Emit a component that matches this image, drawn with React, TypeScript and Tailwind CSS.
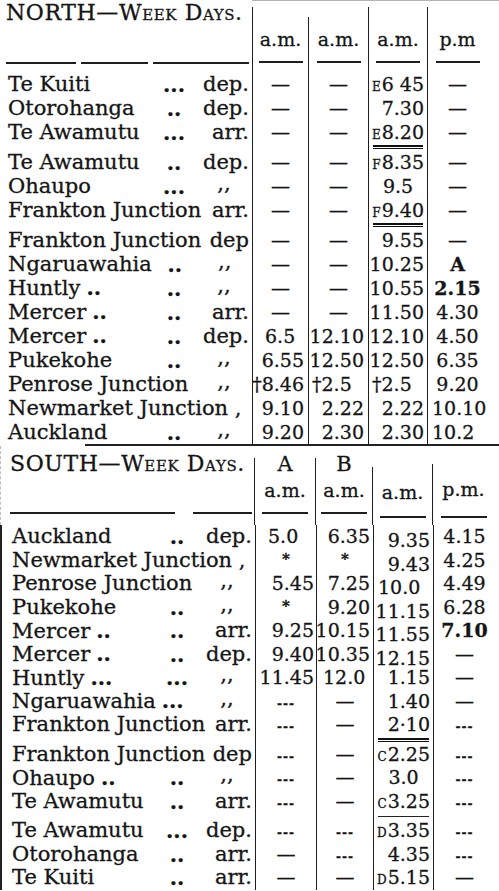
import React from 'react';

type Cell = string | { t: string; a?: 'l' | 'c' | 'r'; b?: boolean; low?: boolean };
type Row = { name: string; nd?: string; dots?: string; suf?: string; cells: Cell[]; rule?: 'thick' | 'thin' };
type Pad = { r: string; l: string; c: string };

const LINE = 'border-l-[1.5px] border-[#1e1e1e]';
const NORTH_GRID = 'grid grid-cols-[252px_56px_60px_59px_72px]';
const SOUTH_GRID = 'grid grid-cols-[253px_61px_57px_60px_68px]';

const north: Row[] = [
  { name: 'Te Kuiti', dots: '...', suf: 'dep.', cells: ['—', '—', 'E6 45', '—'] },
  { name: 'Otorohanga', dots: '..', suf: 'dep.', cells: ['—', '—', '7.30', '—'] },
  { name: 'Te Awamutu', dots: '...', suf: 'arr.', cells: ['—', '—', 'E8.20', '—'], rule: 'thick' },
  { name: 'Te Awamutu', dots: '..', suf: 'dep.', cells: ['—', '—', 'F8.35', '—'] },
  { name: 'Ohaupo', dots: '...', suf: ',,', cells: ['—', '—', { t: '9.5', a: 'c' }, '—'] },
  { name: 'Frankton Junction', suf: 'arr.', cells: ['—', '—', 'F9.40', '—'], rule: 'thick' },
  { name: 'Frankton Junction', suf: 'dep', cells: ['—', '—', '9.55', '—'] },
  { name: 'Ngaruawahia', dots: '..', suf: ',,', cells: ['—', '—', '10.25', { t: 'A', b: true }] },
  { name: 'Huntly', nd: '..', dots: '..', suf: ',,', cells: ['—', '—', '10.55', { t: '2.15', b: true }] },
  { name: 'Mercer', nd: '..', dots: '..', suf: 'arr.', cells: ['—', '—', '11.50', '4.30'] },
  { name: 'Mercer', nd: '..', dots: '..', suf: 'dep.', cells: [{ t: '6.5', a: 'l' }, '12.10', '12.10', '4.50'] },
  { name: 'Pukekohe', dots: '..', suf: ',,', cells: ['6.55', '12.50', '12.50', '6.35'] },
  { name: 'Penrose Junction', suf: ',,', cells: ['†8.46', { t: '†2.5', a: 'l' }, { t: '†2.5', a: 'l' }, '9.20'] },
  { name: 'Newmarket Junction ,', cells: ['9.10', '2.22', '2.22', { t: '10.10', a: 'l' }] },
  { name: 'Auckland', dots: '..', suf: ',,', cells: ['9.20', '2.30', '2.30', { t: '10.2', a: 'l' }] },
];

const south: Row[] = [
  { name: 'Auckland', dots: '..', suf: 'dep.', cells: [{ t: '5.0', a: 'l' }, '6.35', { t: '9.35', low: true }, '4.15'] },
  { name: 'Newmarket Junction ,', cells: ['*', '*', { t: '9.43', low: true }, '4.25'] },
  { name: 'Penrose Junction', suf: ',,', cells: ['5.45', '7.25', { t: '10.0', a: 'l', low: true }, '4.49'] },
  { name: 'Pukekohe', dots: '..', suf: ',,', cells: ['*', '9.20', { t: '11.15', low: true }, '6.28'] },
  { name: 'Mercer', nd: '..', dots: '..', suf: 'arr.', cells: ['9.25', '10.15', { t: '11.55', low: true }, { t: '7.10', b: true }] },
  { name: 'Mercer', nd: '..', dots: '..', suf: 'dep.', cells: ['9.40', '10.35', { t: '12.15', low: true }, '—'] },
  { name: 'Huntly', nd: '...', dots: '...', suf: ',,', cells: ['11.45', { t: '12.0', a: 'l' }, '1.15', '—'] },
  { name: 'Ngaruawahia', nd: '...', suf: ',,', cells: ['---', '—', '1.40', '—'] },
  { name: 'Frankton Junction', suf: 'arr.', cells: ['---', '—', '2·10', '---'], rule: 'thick' },
  { name: 'Frankton Junction', suf: 'dep', cells: ['---', '—', 'C2.25', '---'] },
  { name: 'Ohaupo', nd: '..', dots: '..', suf: ',,', cells: ['---', '—', { t: '3.0', a: 'c' }, '---'] },
  { name: 'Te Awamutu', dots: '..', suf: 'arr.', cells: ['---', '—', 'C3.25', '---'], rule: 'thin' },
  { name: 'Te Awamutu', dots: '...', suf: 'dep.', cells: ['---', '---', 'D3.35', '---'] },
  { name: 'Otorohanga', dots: '..', suf: 'arr.', cells: ['—', '---', '4.35', '---'] },
  { name: 'Te Kuiti', dots: '..', suf: 'arr.', cells: ['—', '—', 'D5.15', '—'] },
];

const northPads: Pad[] = [
  { r: 'pr-[4px]', l: 'pl-[12px]', c: '' },
  { r: 'pr-[4px]', l: 'pl-[3px]', c: '' },
  { r: 'pr-[3px]', l: 'pl-[3px]', c: '' },
  { r: 'pr-[16px]', l: 'pl-[4px]', c: 'pr-[12px]' },
];

const southPads: Pad[] = [
  { r: 'pr-[2px]', l: 'pl-[12px]', c: '' },
  { r: 'pr-[3px]', l: 'pl-[6px]', c: '' },
  { r: 'pr-[3px]', l: 'pl-[4px]', c: '' },
  { r: 'pr-[10px]', l: 'pl-[4px]', c: 'pr-[6px]' },
];

function Val({ t }: { t: string }) {
  if (t === '---') return <span className="text-[12px] font-bold tracking-[1px]">---</span>;
  if (t === '*') return <span className="inline-block -translate-y-[3px] text-[15px] font-bold">*</span>;
  const m = t.match(/^([EFCD])(.+)$/);
  if (m)
    return (
      <span>
        <span className="mr-[1px] text-[12px]">{m[1]}</span>
        {m[2]}
      </span>
    );
  return <span>{t}</span>;
}

function Station({ row, pl }: { row: Row; pl: string }) {
  const name = (
    <>
      {row.name}
      {row.nd && <span className="ml-[6px] font-bold">{row.nd}</span>}
    </>
  );
  return (
    <div className={`grid h-full grid-cols-[1fr_46px_52px] items-center whitespace-nowrap pr-[3px] text-[21px] ${pl}`}>
      {row.dots ? (
        <>
          <span>{name}</span>
          <span className="text-center font-bold">{row.dots}</span>
        </>
      ) : (
        <span className={row.suf ? 'col-span-2' : 'col-span-3'}>{name}</span>
      )}
      {row.suf &&
        (row.suf === ',,' ? (
          <span className="pl-[2px] text-center">
            <span className="inline-block -translate-y-[3px]">,,</span>
          </span>
        ) : (
          <span className="text-right">{row.suf}</span>
        ))}
    </div>
  );
}

function NumCell({ cell, i, pads }: { cell: Cell; i: number; pads: Pad[] }) {
  const c = typeof cell === 'string' ? { t: cell } : cell;
  const plain = c.t === '—' || c.t === '---' || c.t === '*';
  const a = c.a ?? (plain || i === 3 ? 'c' : 'r');
  const just = a === 'r' ? 'justify-end' : a === 'l' ? 'justify-start' : 'justify-center';
  const pad = pads[i][a];
  return (
    <div className={`${LINE} flex h-full items-center text-[19px] ${just} ${pad} ${c.b ? 'font-bold' : ''}`}>
      <span className={c.low ? 'translate-y-[4px]' : ''}>
        <Val t={c.t} />
      </span>
    </div>
  );
}

function RuleRow({ grid, kind }: { grid: string; kind: 'thick' | 'thin' }) {
  return (
    <div className={`${grid} h-[6px]`}>
      <div />
      <div className={LINE} />
      <div className={LINE} />
      <div className={`${LINE} flex items-center px-[4px]`}>
        {kind === 'thick' ? (
          <div className="h-[4px] w-full border-t-[2px] border-b-[1px] border-[#111]" />
        ) : (
          <div className="h-0 w-full border-t-[1.5px] border-[#222]" />
        )}
      </div>
      <div className={LINE} />
    </div>
  );
}

function Table({ rows, grid, h, pads, pl }: { rows: Row[]; grid: string; h: string; pads: Pad[]; pl: string }) {
  return (
    <div>
      {rows.map((row, r) => (
        <React.Fragment key={r}>
          <div className={`${grid} ${h}`}>
            <Station row={row} pl={pl} />
            {row.cells.map((cell, i) => (
              <NumCell key={i} cell={cell} i={i} pads={pads} />
            ))}
          </div>
          {row.rule && <RuleRow grid={grid} kind={row.rule} />}
        </React.Fragment>
      ))}
    </div>
  );
}

function Title({ dir }: { dir: string }) {
  return (
    <div className="whitespace-nowrap text-[22px] leading-none tracking-[0.6px]">
      {dir}—<span className="[font-variant:small-caps]">Week Days.</span>
    </div>
  );
}

function NorthHead() {
  const labels = ['a.m.', 'a.m.', 'a.m.', 'p.m'];
  return (
    <div className={`${NORTH_GRID} h-[72px]`}>
      <div className="flex flex-col pl-[6px] pr-[3px] pt-[2px]">
        <Title dir="NORTH" />
        <div className="mb-[8px] mt-auto flex gap-[5px]">
          <div className="h-[2px] w-[70px] bg-[#1e1e1e]" />
          <div className="h-[2px] w-[67px] bg-[#1e1e1e]" />
          <div className="h-[2px] flex-1 bg-[#1e1e1e]" />
        </div>
      </div>
      {labels.map((l, i) => (
        <div key={i} className="flex flex-col border-t border-[#b5b5b5]">
          <div className={i === 1 ? 'h-[16px]' : 'h-[6px]'} />
          <div className={`${LINE} flex flex-1 flex-col items-center ${i === 3 ? 'pr-[12px]' : ''}`}>
            <div className={`${i === 1 ? 'mt-[13px]' : 'mt-[23px]'} text-[19px] leading-none`}>{l}</div>
            <div className="mt-[12px] h-[2px] w-[44px] bg-[#1e1e1e]" />
          </div>
        </div>
      ))}
    </div>
  );
}

function SouthHead() {
  const cols = [
    { top: 'A', l: 'a.m.', s: 'h-[12px]', m: 'mt-[6px]', u: 'mt-[12px]' },
    { top: 'B', l: 'a.m.', s: 'h-[12px]', m: 'mt-[6px]', u: 'mt-[12px]' },
    { top: '', l: 'a.m.', s: 'h-[21px]', m: 'mt-[16px]', u: 'mt-[14px]' },
    { top: '', l: 'p.m.', s: 'h-[18px]', m: 'mt-[16px]', u: 'mt-[17px]' },
  ];
  return (
    <div className={`${SOUTH_GRID} h-[79px] border-l border-dashed border-[#bdbdbd]`}>
      <div className="flex flex-col pl-[9px] pr-[2px] pt-[7px]">
        <Title dir="SOUTH" />
        <div className="mb-[11px] mt-auto flex gap-[18px]">
          <div className="h-[2px] w-[165px] bg-[#1e1e1e]" />
          <div className="h-[2px] flex-1 bg-[#1e1e1e]" />
        </div>
      </div>
      {cols.map((c, i) => (
        <div key={i} className="flex flex-col">
          <div className={c.s} />
          <div className={`${LINE} flex flex-1 flex-col items-center ${i === 3 ? 'pr-[6px]' : ''}`}>
            {c.top ? <div className="-mt-[4px] text-[21px] leading-none">{c.top}</div> : null}
            <div className={`${c.m} text-[19px] leading-none`}>{c.l}</div>
            <div className={`${c.u} h-[2px] w-[46px] bg-[#1e1e1e]`} />
          </div>
        </div>
      ))}
    </div>
  );
}

export default function App() {
  return (
    <div className="h-[891px] w-[499px] overflow-hidden bg-white font-['DejaVu_Serif',serif] leading-none text-[#151515] [-webkit-text-stroke:0.3px_#151515]">
      <NorthHead />
      <Table rows={north} grid={NORTH_GRID} h="h-[24px]" pads={northPads} pl="pl-[8px]" />
      <div className="ml-[85px] h-[2px] bg-[#222]" />
      <SouthHead />
      <div className="border-l-2 border-[#222]">
        <Table rows={south} grid={SOUTH_GRID} h="h-[23.5px]" pads={southPads} pl="pl-[10px]" />
      </div>
    </div>
  );
}
